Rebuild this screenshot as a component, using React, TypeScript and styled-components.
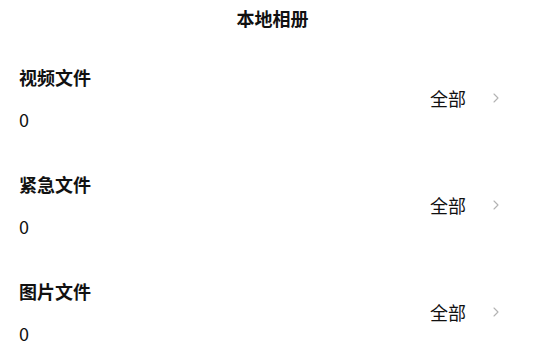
import React from "react";
import styled, { createGlobalStyle } from "styled-components";

const Global = createGlobalStyle`
  html, body { margin: 0; padding: 0; background: #fff; }
  body { font-family: "Noto Sans CJK SC", "Noto Sans", sans-serif; color: #111; }
`;

const Page = styled.div`
  width: 545px;
  display: flex;
  flex-direction: column;
`;

const Header = styled.div`
  height: 36px;
  display: flex;
  align-items: center;
  justify-content: center;
  font-size: 18px;
  font-weight: 600;
  color: #111;
`;

const List = styled.div`
  display: flex;
  flex-direction: column;
  padding-top: 8px;
`;

const Row = styled.div`
  height: 107px;
  display: flex;
  align-items: center;
  justify-content: space-between;
  padding: 0 46px 0 19px;
`;

const Info = styled.div`
  display: flex;
  flex-direction: column;
  gap: 18px;
`;

const Title = styled.div`
  font-size: 18px;
  line-height: 24px;
  font-weight: 600;
`;

const Count = styled.div`
  font-size: 18px;
  line-height: 24px;
`;

const Action = styled.div`
  display: flex;
  align-items: center;
  gap: 27px;
  font-size: 18px;
  line-height: 24px;
`;

const Chevron = () => (
  <svg width="6" height="10" viewBox="0 0 6 10" fill="none">
    <path d="M1 1l4 4-4 4" stroke="#b3b3b3" strokeWidth="1.1" strokeLinecap="round" strokeLinejoin="round" />
  </svg>
);

const sections = ["视频文件", "紧急文件", "图片文件"];

export default function App() {
  return (
    <Page>
      <Global />
      <Header>本地相册</Header>
      <List>
        {sections.map((s) => (
          <Row key={s}>
            <Info>
              <Title>{s}</Title>
              <Count>0</Count>
            </Info>
            <Action>
              全部
              <Chevron />
            </Action>
          </Row>
        ))}
      </List>
    </Page>
  );
}
